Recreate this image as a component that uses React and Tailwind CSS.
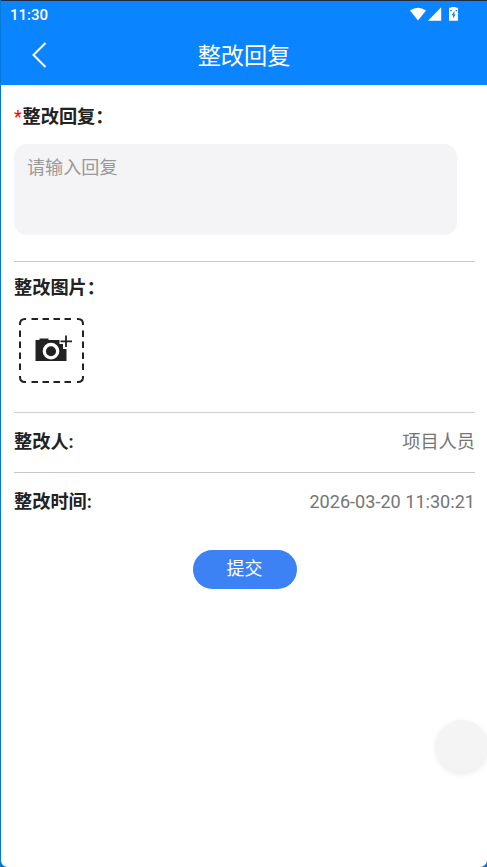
import React from "react";

function StatusIcons() {
  return (
    <svg className="block" width="50" height="16" viewBox="0 0 50 16" fill="#fff">
      <path d="M0 3.6Q8 -2.200 16 3.600L8 13.500Z" />
      <path d="M31.200 0.300V13.700H18Z" />
      <path
        fillRule="evenodd"
        d="M41.300 -0.700h4.400v1.500h2.300v12.900h-9v-12.900h2.300ZM44.400 4L41.600 8.300h1.500v3.200L45.600 7.400H44.400ZM40.300 3v1.200h1.500v-1.200ZM45.600 3v1.200h1.400v-1.200Z"
      />
    </svg>
  );
}

function CameraPlus() {
  return (
    <svg className="block" width="66" height="66" viewBox="0 0 66 66" fill="none">
      <path
        d="M2 8V7Q2 2 7 2H8M59 2H60Q65 2 65 7V8M65 59V60Q65 65 60 65H59M8 65H7Q2 65 2 60V59"
        stroke="#222"
        strokeWidth="2"
      />
      <path
        d="M12.500 2H54.500M12.500 65H54.500M2 12.500V54.500M65 12.500V54.500"
        stroke="#222"
        strokeWidth="2"
        strokeDasharray="6.500 4.500"
        strokeDashoffset="-1"
      />
      <path d="M17.500 23H21.500V21.500H30.500V23H48.500V44H17.500Z" fill="#222" />
      <path d="M47.500 18v14M41.500 24.500h13" stroke="#fff" strokeWidth="5" />
      <path d="M48 18.500v11.500M42.500 24.300h11.500" stroke="#222" strokeWidth="1.800" />
      <circle cx="33" cy="34.200" r="6.700" fill="#222" stroke="#fff" strokeWidth="3.300" />
    </svg>
  );
}

function Label({ required, children }) {
  return (
    <div className="text-[18.2px] leading-[26px] font-bold text-[#222] whitespace-nowrap">
      {required && <span className="inline-block w-[8.500px] font-normal text-[#f00]">*</span>}
      {children}
    </div>
  );
}

export default function App() {
  return (
    <div className="relative h-[867px] w-[487px] overflow-hidden bg-[#0b6fcb] font-[Roboto,'Noto_Sans_CJK_SC',sans-serif]">
      <div className="flex h-full flex-col overflow-hidden rounded-b-[7px] border-l border-[#0078d7] bg-white">
        <header className="h-[85px] shrink-0 border-t border-[#222b3a] bg-[#0a84ff] text-white">
          <div className="flex h-[28px] items-center justify-between pr-[27px] pl-[9px]">
            <span className="text-[15px] leading-[28px] font-medium">11:30</span>
            <StatusIcons />
          </div>
          <div className="grid h-[52px] grid-cols-[60px_1fr_60px] items-center">
            <svg className="ml-[31px] block" width="15" height="26" viewBox="0 0 15 26" fill="none">
              <path d="M13.500 1L1.500 13L13.500 25" stroke="#fff" strokeWidth="2" />
            </svg>
            <h1 className="pt-[2px] text-center text-[23.200px] leading-[34px] font-normal">整改回复</h1>
          </div>
        </header>

        <main className="flex flex-col pr-[12px] pl-[13px] pt-[19px]">
          <Label required>整改回复：</Label>
          <div className="mt-[14px] h-[91px] w-[443px] rounded-[13px] bg-[#f4f3f6] px-[13px] pt-[11px] text-[18.100px] leading-[26px] text-[#999]">
            请输入回复
          </div>
          <div className="mt-[26px] h-px bg-[#c8c8c8]" />
          <div className="mt-[13px]">
            <Label>整改图片：</Label>
          </div>
          <div className="mt-[16px] ml-[4px]">
            <CameraPlus />
          </div>
          <div className="mt-[29px] h-px bg-[#cfcfcf]" />
          <div className="flex h-[59px] items-center justify-between pb-[2px]">
            <Label>整改人:</Label>
            <span className="text-[18.200px] leading-[26px] text-[#757575]">项目人员</span>
          </div>
          <div className="h-px bg-[#c8c8c8]" />
          <div className="flex h-[58px] items-center justify-between">
            <Label>整改时间:</Label>
            <span className="text-[18.100px] leading-[26px] text-[#757575]">2026-03-20 11:30:21</span>
          </div>
          <button className="mt-[19px] h-[39px] w-[104px] self-center rounded-full bg-[#3c82f5] pb-[2px] text-[18px] leading-[26px] text-white">
            提交
          </button>
        </main>
      </div>
      <div className="absolute top-[720px] left-[436px] size-[52px] rounded-full bg-[#f4f4f4] shadow-[0_2px_6px_rgba(0,0,0,0.09)]" />
    </div>
  );
}
